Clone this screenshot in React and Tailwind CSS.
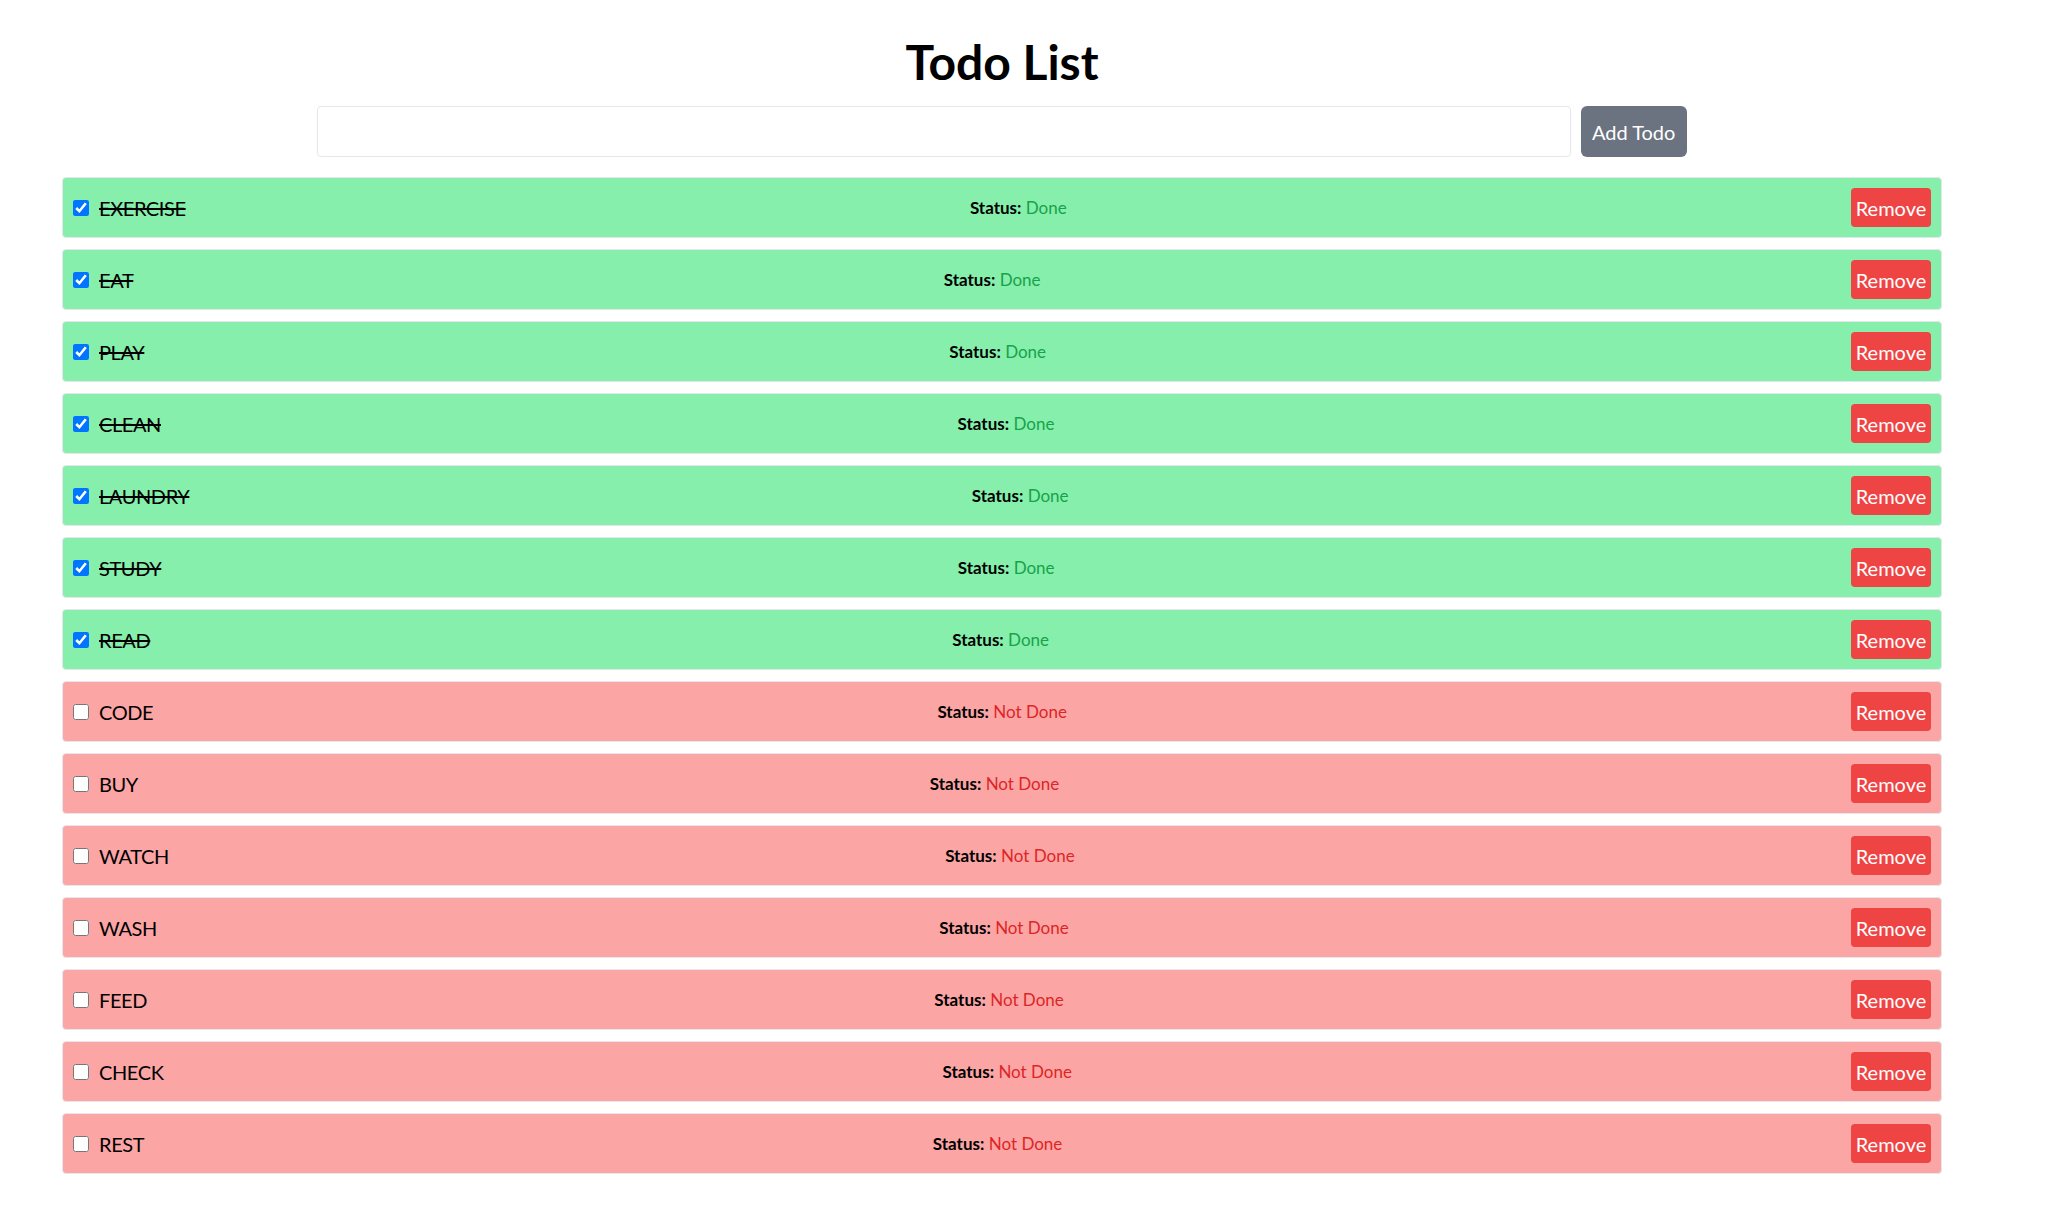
import React, { useState } from "react";

const INITIAL = [
  { id: 1, text: "EXERCISE", done: true },
  { id: 2, text: "EAT", done: true },
  { id: 3, text: "PLAY", done: true },
  { id: 4, text: "CLEAN", done: true },
  { id: 5, text: "LAUNDRY", done: true },
  { id: 6, text: "STUDY", done: true },
  { id: 7, text: "READ", done: true },
  { id: 8, text: "CODE", done: false },
  { id: 9, text: "BUY", done: false },
  { id: 10, text: "WATCH", done: false },
  { id: 11, text: "WASH", done: false },
  { id: 12, text: "FEED", done: false },
  { id: 13, text: "CHECK", done: false },
  { id: 14, text: "REST", done: false },
];

function TodoRow({ todo, onToggle, onRemove }) {
  return (
    <li
      className={
        "flex h-[61px] items-center justify-between rounded border border-[#e5e7eb] p-[10px] " +
        (todo.done ? "bg-[#86efac]" : "bg-[#fca5a5]")
      }
    >
      <label className="flex items-center">
        <input
          type="checkbox"
          className="h-4 w-4"
          checked={todo.done}
          onChange={() => onToggle(todo.id)}
        />
        <span
          className={
            "ml-[10px] text-[20px] tracking-[-0.02em] text-black " + (todo.done ? "line-through" : "")
          }
        >
          {todo.text}
        </span>
      </label>
      <div className="text-[17px]">
        <span className="font-bold text-black">Status:</span>{" "}
        <span className={todo.done ? "text-[#16a34a]" : "text-[#dc2626]"}>
          {todo.done ? "Done" : "Not Done"}
        </span>
      </div>
      <button
        className="h-[39px] w-[80px] rounded bg-[#ef4444] text-[20px] text-white"
        onClick={() => onRemove(todo.id)}
      >
        Remove
      </button>
    </li>
  );
}

export default function App() {
  const [todos, setTodos] = useState(INITIAL);
  const [input, setInput] = useState("");

  const addTodo = () => {
    if (!input.trim()) return;
    setTodos([...todos, { id: Date.now(), text: input.trim().toUpperCase(), done: false }]);
    setInput("");
  };

  return (
    <div
      className="min-h-screen bg-white"
      style={{ fontFamily: "Lato, 'Noto Sans', sans-serif" }}
    >
      <div className="ml-[62px] w-[1880px] pt-[38px]">
        <h1 className="text-center text-5xl font-bold leading-[48px] text-black">Todo List</h1>
        <div className="mt-5 flex justify-center gap-[10px]">
          <input
            type="text"
            className="h-[51px] w-2/3 rounded border border-[#e5e7eb] px-3 text-[20px] outline-none"
            value={input}
            onChange={(e) => setInput(e.target.value)}
          />
          <button
            className="h-[51px] w-[106px] rounded-md bg-[#6b7280] text-[20px] text-white"
            onClick={addTodo}
          >
            Add Todo
          </button>
        </div>
        <ul className="mt-5 flex flex-col gap-[11px]">
          {todos.map((t) => (
            <TodoRow
              key={t.id}
              todo={t}
              onToggle={(id) =>
                setTodos(todos.map((x) => (x.id === id ? { ...x, done: !x.done } : x)))
              }
              onRemove={(id) => setTodos(todos.filter((x) => x.id !== id))}
            />
          ))}
        </ul>
      </div>
    </div>
  );
}
